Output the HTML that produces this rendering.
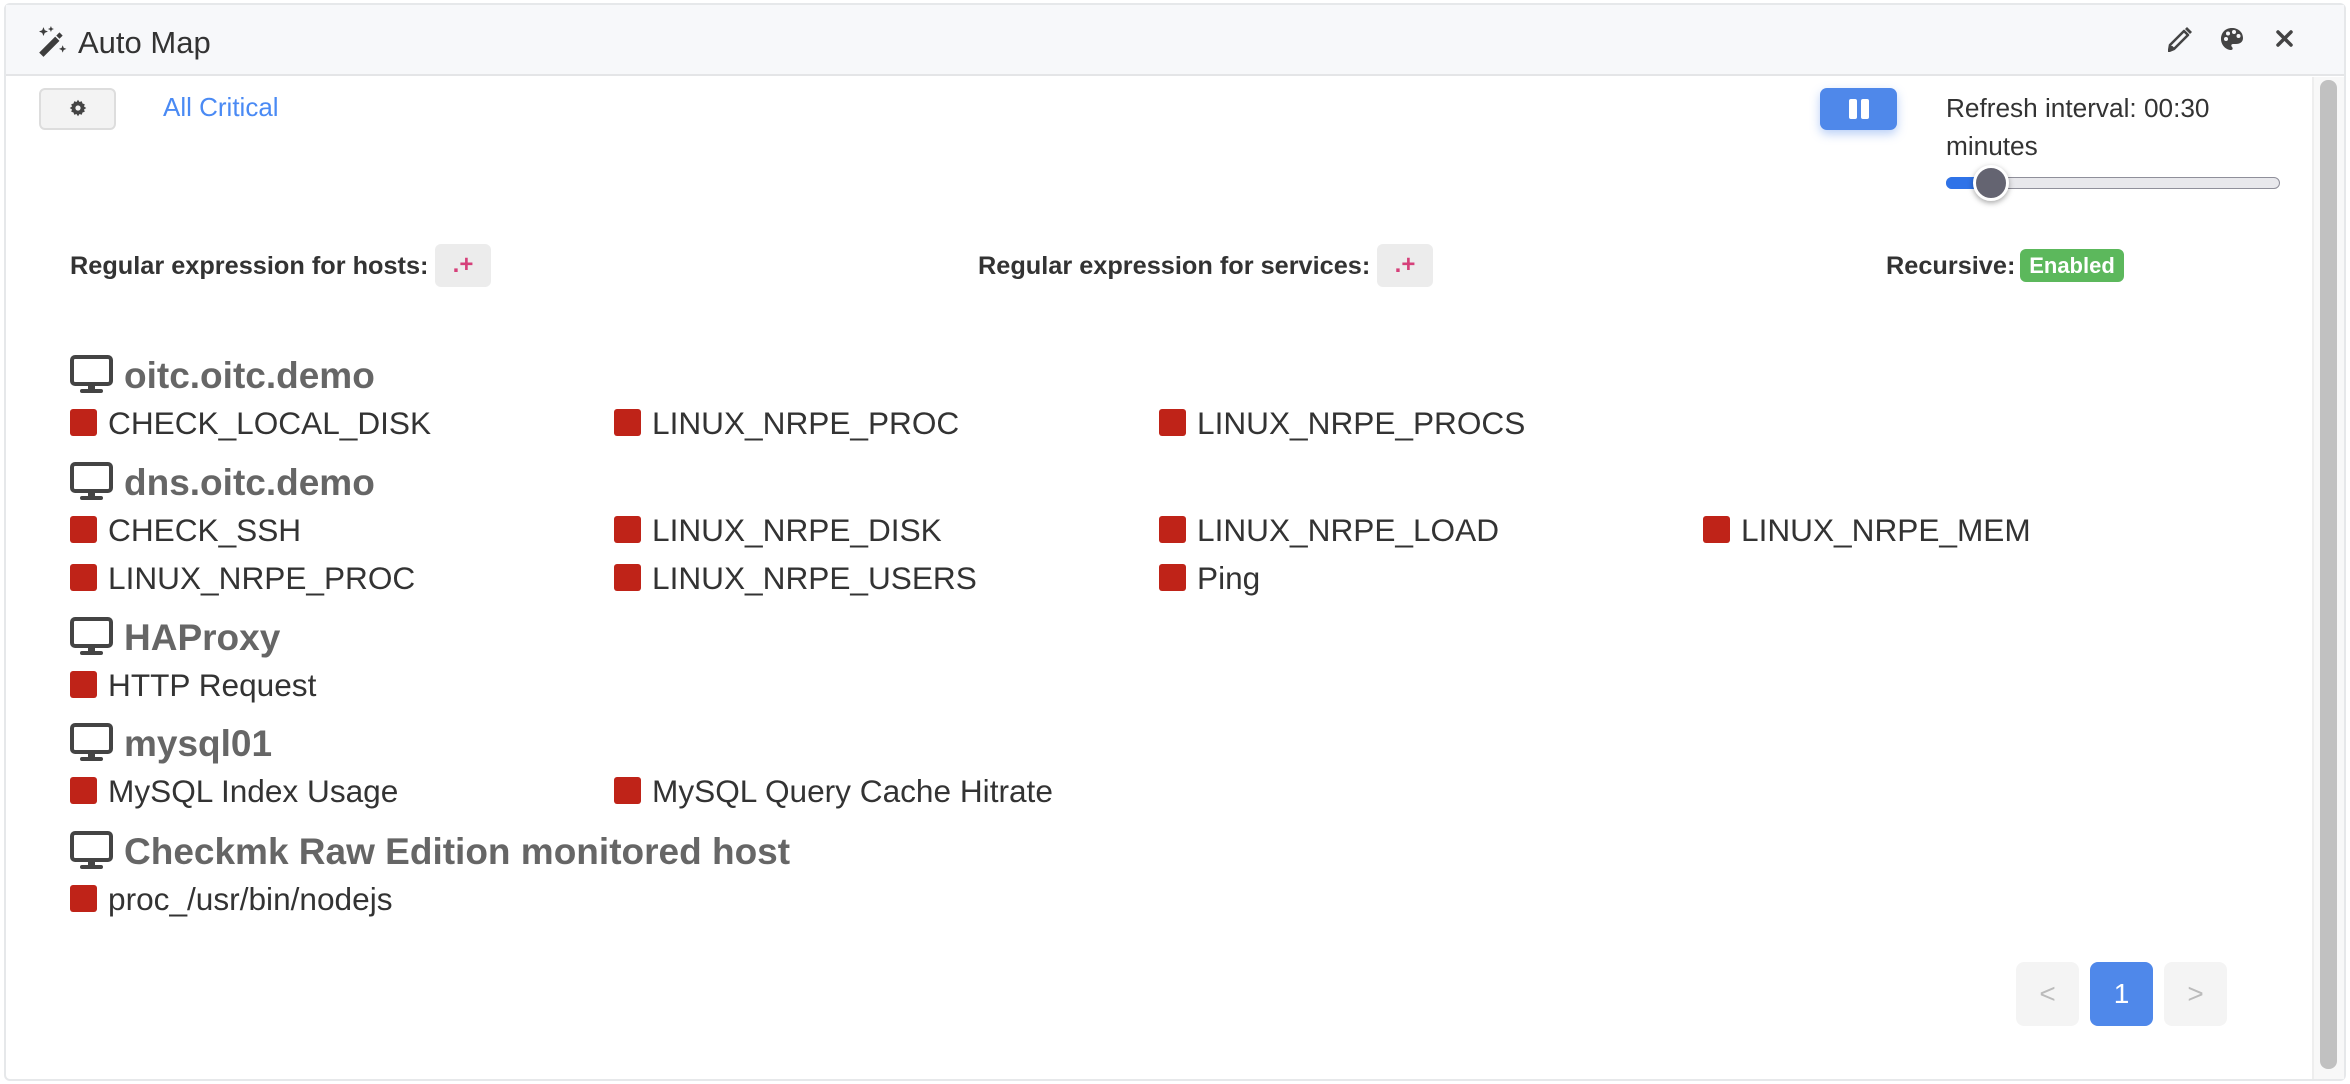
<!DOCTYPE html>
<html><head><meta charset="utf-8"><style>
*{box-sizing:border-box;margin:0;padding:0}
body{width:2350px;height:1084px;background:#fff;font-family:"Liberation Sans",Arial,sans-serif;position:relative;overflow:hidden;color:#333}
.abs{position:absolute}
.panel{left:4px;top:3px;width:2342px;height:1078px;border:2px solid #e6e8ea;border-radius:6px}
.hdr{left:6px;top:5px;width:2338px;height:71px;background:#f7f8fa;border-bottom:2px solid #e4e5e7}
.t{white-space:nowrap;line-height:1}
.sq{width:27px;height:27px;background:#bf2318;border-radius:3px}
.svc{font-size:31.6px;color:#333}
.host{font-size:37px;font-weight:bold;color:#666}
.lbl{font-size:25.3px;font-weight:bold;color:#333}
.code{background:#ececec;border-radius:6px;color:#d6407a;font-family:"Liberation Sans",sans-serif;font-weight:bold;font-size:24px;text-align:center;line-height:41px}
.pg{width:63px;height:64px;border-radius:8px;background:#f4f4f4;color:#bbb;font-size:28px;text-align:center;line-height:64px}
</style></head><body>
<div class="abs panel"></div>
<div class="abs hdr"></div>
<svg class="abs" style="left:37px;top:26px" width="30" height="32" viewBox="0 0 28 30"><path d="M2 25 L17 10 L21 14 L6 29 Z" fill="#3d3d3d"/><path d="M18 9 L21 6 L24 9 L21 12 Z" fill="#3d3d3d"/><path d="M6 1 l1.2 3 3 1.2-3 1.2-1.2 3-1.2-3-3-1.2 3-1.2z M13 0 l.8 2 2 .8-2 .8-.8 2-.8-2-2-.8 2-.8z M24 18 l1 2.5 2.5 1-2.5 1-1 2.5-1-2.5-2.5-1 2.5-1z" fill="#3d3d3d"/></svg>
<div class="abs t" style="left:78px;top:27px;font-size:31px;color:#333">Auto Map</div>
<svg class="abs" style="left:2168px;top:27px" width="24" height="25" viewBox="0 0 24 25"><path d="M2 18 L16 4 L20 8 L6 22 L1 24 Z M4 19 L3 22 L6 21" fill="none" stroke="#444" stroke-width="2.5" stroke-linejoin="round"/><path d="M17 2 L19 0 L24 5 L22 7 Z" fill="#444"/></svg>
<svg class="abs" style="left:2220px;top:27px" width="24" height="24" viewBox="0 0 24 24"><path d="M12 1C5 1 1 6 1 12c0 6 5 11 10 11 2 0 2-2 1-3-1-1-1-3 1-3h3c4 0 7-2 7-6C23 5 18 1 12 1z" fill="#444"/><circle cx="6" cy="12" r="2" fill="#f7f8fa"/><circle cx="8" cy="6.5" r="2" fill="#f7f8fa"/><circle cx="14" cy="5" r="2" fill="#f7f8fa"/><circle cx="18.5" cy="9" r="2" fill="#f7f8fa"/></svg>
<svg class="abs" style="left:2276px;top:30px" width="17" height="17" viewBox="0 0 17 17"><path d="M2 2L15 15M15 2L2 15" stroke="#444" stroke-width="3.5" stroke-linecap="round"/></svg>

<div class="abs" style="left:39px;top:88px;width:77px;height:42px;border:2px solid #ddd;border-radius:6px;background:#f3f3f3"></div>
<svg class="abs" style="left:69px;top:99px" width="18" height="18" viewBox="0 0 24 24"><path d="M12 1l2 3 3-1 1 3 3 1-1 3 3 2-3 2 1 3-3 1-1 3-3-1-2 3-2-3-3 1-1-3-3-1 1-3-3-2 3-2-1-3 3-1 1-3 3 1z" fill="#444"/><circle cx="12" cy="12" r="3.5" fill="#f3f3f3"/></svg>
<div class="abs t" style="left:163px;top:94px;font-size:26px;color:#4a8af4">All Critical</div>

<div class="abs" style="left:1820px;top:88px;width:77px;height:42px;background:#4f88ea;border-radius:7px;box-shadow:0 4px 10px rgba(79,136,234,.4)"></div>
<div class="abs" style="left:1849px;top:99px;width:8px;height:20px;background:#fff;border-radius:2px"></div>
<div class="abs" style="left:1861px;top:99px;width:8px;height:20px;background:#fff;border-radius:2px"></div>
<div class="abs t" style="left:1946px;top:95px;font-size:26.2px;color:#333">Refresh interval: 00:30</div>
<div class="abs t" style="left:1946px;top:133px;font-size:26.2px;color:#333">minutes</div>
<div class="abs" style="left:1946px;top:177px;width:334px;height:12px;background:#e8e8ec;border:1px solid #8f8f9a;border-radius:6px"></div>
<div class="abs" style="left:1946px;top:177px;width:45px;height:12px;background:#2f73e8;border-radius:6px"></div>
<div class="abs" style="left:1973px;top:165px;width:36px;height:36px;background:#646471;border:3px solid #fff;border-radius:50%;box-shadow:0 2px 6px rgba(0,0,0,.35)"></div>

<div class="abs" style="left:2312px;top:77px;width:32px;height:1002px;background:#f8f8f8;border-left:2px solid #eee"></div>
<div class="abs" style="left:2320px;top:80px;width:17px;height:989px;background:#c1c1c1;border-radius:8px"></div>

<div class="abs t lbl" style="left:70px;top:254px">Regular expression for hosts:</div>
<div class="abs code" style="left:435px;top:244px;width:56px;height:43px">.+</div>
<div class="abs t lbl" style="left:978px;top:254px">Regular expression for services:</div>
<div class="abs code" style="left:1377px;top:244px;width:56px;height:43px">.+</div>
<div class="abs t lbl" style="left:1886px;top:254px">Recursive:</div>
<div class="abs t" style="left:2020px;top:249px;width:104px;height:33px;background:#5cb85c;border-radius:6px;color:#fff;font-weight:bold;font-size:22px;line-height:33px;text-align:center">Enabled</div>

<svg width="0" height="0" style="position:absolute"><defs><g id="mon"><rect x="2" y="2" width="39" height="27" rx="3" fill="none" stroke="#444" stroke-width="4"/><rect x="18" y="29" width="7" height="6" fill="#444"/><rect x="10" y="34" width="23" height="4" rx="2" fill="#444"/></g></defs></svg>

<svg class="abs" style="left:70px;top:355px" width="43" height="39"><use href="#mon"/></svg>
<div class="abs t host" style="left:124px;top:357px">oitc.oitc.demo</div>
<div class="abs sq" style="left:70px;top:409px"></div><div class="abs t svc" style="left:108px;top:408px">CHECK_LOCAL_DISK</div>
<div class="abs sq" style="left:614px;top:409px"></div><div class="abs t svc" style="left:652px;top:408px">LINUX_NRPE_PROC</div>
<div class="abs sq" style="left:1159px;top:409px"></div><div class="abs t svc" style="left:1197px;top:408px">LINUX_NRPE_PROCS</div>

<svg class="abs" style="left:70px;top:462px" width="43" height="39"><use href="#mon"/></svg>
<div class="abs t host" style="left:124px;top:464px">dns.oitc.demo</div>
<div class="abs sq" style="left:70px;top:516px"></div><div class="abs t svc" style="left:108px;top:515px">CHECK_SSH</div>
<div class="abs sq" style="left:614px;top:516px"></div><div class="abs t svc" style="left:652px;top:515px">LINUX_NRPE_DISK</div>
<div class="abs sq" style="left:1159px;top:516px"></div><div class="abs t svc" style="left:1197px;top:515px">LINUX_NRPE_LOAD</div>
<div class="abs sq" style="left:1703px;top:516px"></div><div class="abs t svc" style="left:1741px;top:515px">LINUX_NRPE_MEM</div>
<div class="abs sq" style="left:70px;top:564px"></div><div class="abs t svc" style="left:108px;top:563px">LINUX_NRPE_PROC</div>
<div class="abs sq" style="left:614px;top:564px"></div><div class="abs t svc" style="left:652px;top:563px">LINUX_NRPE_USERS</div>
<div class="abs sq" style="left:1159px;top:564px"></div><div class="abs t svc" style="left:1197px;top:563px">Ping</div>

<svg class="abs" style="left:70px;top:617px" width="43" height="39"><use href="#mon"/></svg>
<div class="abs t host" style="left:124px;top:619px">HAProxy</div>
<div class="abs sq" style="left:70px;top:671px"></div><div class="abs t svc" style="left:108px;top:670px">HTTP Request</div>

<svg class="abs" style="left:70px;top:723px" width="43" height="39"><use href="#mon"/></svg>
<div class="abs t host" style="left:124px;top:725px">mysql01</div>
<div class="abs sq" style="left:70px;top:777px"></div><div class="abs t svc" style="left:108px;top:776px">MySQL Index Usage</div>
<div class="abs sq" style="left:614px;top:777px"></div><div class="abs t svc" style="left:652px;top:776px">MySQL Query Cache Hitrate</div>

<svg class="abs" style="left:70px;top:831px" width="43" height="39"><use href="#mon"/></svg>
<div class="abs t host" style="left:124px;top:833px">Checkmk Raw Edition monitored host</div>
<div class="abs sq" style="left:70px;top:885px"></div><div class="abs t svc" style="left:108px;top:884px">proc_/usr/bin/nodejs</div>

<div class="abs pg" style="left:2016px;top:962px">&lt;</div>
<div class="abs pg" style="left:2090px;top:962px;background:#4f88ea;color:#fff">1</div>
<div class="abs pg" style="left:2164px;top:962px">&gt;</div>
</body></html>
